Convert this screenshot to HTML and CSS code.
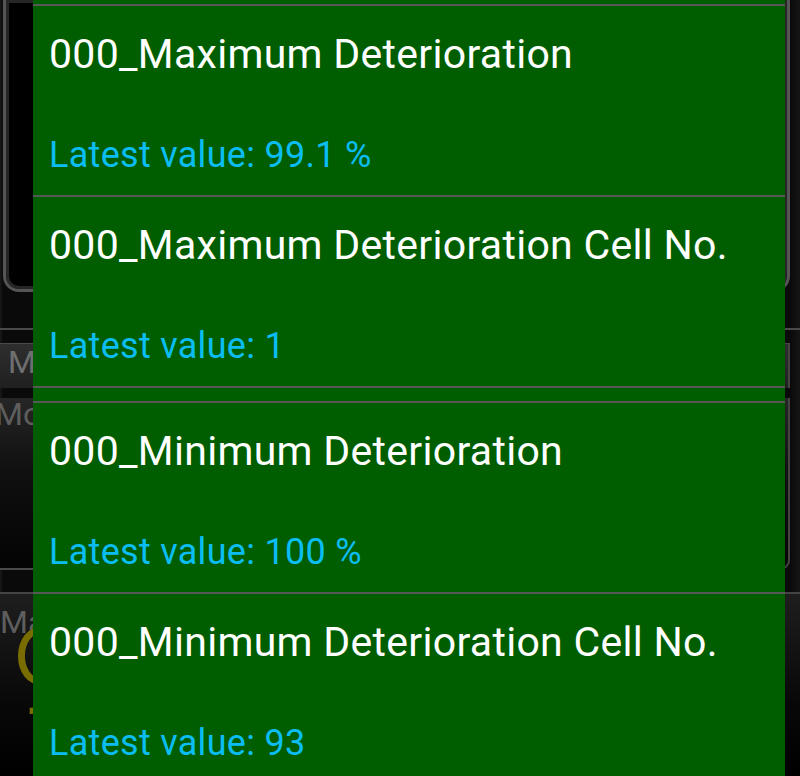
FILE: index.html
```html
<!DOCTYPE html>
<html lang="en">
<head>
<meta charset="utf-8">
<title>Values</title>
<link rel="stylesheet" href="styles.css">
</head>
<body>
<div class="screen">
  <div class="gauge"></div>
  <div class="divider"></div>
  <div class="mi-row"><span class="label">Min</span></div>
  <div class="mot-box"><span class="label">Motor</span></div>
  <div class="ma-box">
    <span class="label">Max</span>
    <span class="big">9</span>
  </div>

  <div class="dialog">
    <div class="group">
      <div class="item">
        <div class="title">000_Maximum Deterioration</div>
        <div class="value">Latest value: 99.1 %</div>
      </div>
      <div class="item">
        <div class="title">000_Maximum Deterioration Cell No.</div>
        <div class="value">Latest value: 1</div>
      </div>
    </div>
    <div class="group">
      <div class="item">
        <div class="title">000_Minimum Deterioration</div>
        <div class="value">Latest value: 100 %</div>
      </div>
      <div class="item">
        <div class="title">000_Minimum Deterioration Cell No.</div>
        <div class="value">Latest value: 93</div>
      </div>
    </div>
  </div>
</div>
</body>
</html>
```

FILE: styles.css
```css
html, body {
  margin: 0;
  padding: 0;
}
body {
  width: 800px;
  height: 776px;
  overflow: hidden;
  background: #0c0c0c;
  font-family: Roboto, "Liberation Sans", sans-serif;
}
.screen {
  position: relative;
  width: 800px;
  height: 776px;
  overflow: hidden;
  display: flex;
  flex-direction: column;
  background: linear-gradient(90deg, #1a1a1a 0, #0a0a0a 3px, #0a0a0a 790px, #151515 800px);
}
.gauge {
  height: 289px;
  flex: none;
  margin: 0 10px 0 3px;
  border: 3px solid #555;
  border-top: none;
  border-radius: 0 0 16px 16px;
  background: #000;
  box-shadow: inset 0 0 0 3px #262626;
}
.divider {
  height: 2px;
  flex: none;
  margin-top: 36px;
  background: #4a4a4a;
}
.label {
  color: #6f6f6f;
  font-size: 32px;
  line-height: 30px;
}
.mi-row {
  height: 41px;
  flex: none;
  margin: 13px 10px 0 0;
  border-top: 1px solid #4a4a4a;
  border-right: 2px solid #444;
  background: linear-gradient(180deg, #2e2e2e, #202020);
  display: flex;
  align-items: flex-start;
  padding: 3px 0 0 8px;
}
.mot-box {
  height: 170px;
  flex: none;
  margin: 10px 10px 0 0;
  border-right: 2px solid #444;
  border-bottom: 2px solid #4a4a4a;
  border-radius: 0 0 10px 0;
  background: linear-gradient(180deg, #262626, #111 40%, #030303);
}
.mot-box .label {
  display: block;
  margin: 1px 0 0 -5px;
  color: #5e5e5e;
}
.ma-box {
  flex: 1;
  margin-top: 22px;
  border-top: 2px solid #444;
  background: linear-gradient(180deg, #1e1e1e, #080808 60%, #000);
  display: flex;
  flex-direction: column;
  align-items: flex-start;
  padding: 16px 0 0 0;
}
.ma-box .label {
  color: #5e5e5e;
  line-height: 24px;
}
.big {
  color: #7a6d00;
  font-size: 120px;
  line-height: 76px;
  margin-left: 12px;
  font-weight: 300;
}

/* overlay dialog */
.dialog {
  position: absolute;
  left: 33px;
  top: 0;
  bottom: 0;
  width: 752px;
  padding-top: 4px;
  background: #005e00;
  display: flex;
  flex-direction: column;
  gap: 13px;
}
.group:first-child {
  border-bottom: 2px solid #575757;
}
.item {
  border-top: 2px solid #575757;
  padding: 24px 0 19px 16px;
  display: flex;
  flex-direction: column;
}
.title {
  color: #ffffff;
  font-size: 41px;
  line-height: 48px;
  letter-spacing: 0.3px;
  white-space: nowrap;
}
.value {
  color: #0bbdf2;
  font-size: 36px;
  line-height: 41px;
  letter-spacing: 0.3px;
  margin-top: 57px;
  white-space: nowrap;
}
```
